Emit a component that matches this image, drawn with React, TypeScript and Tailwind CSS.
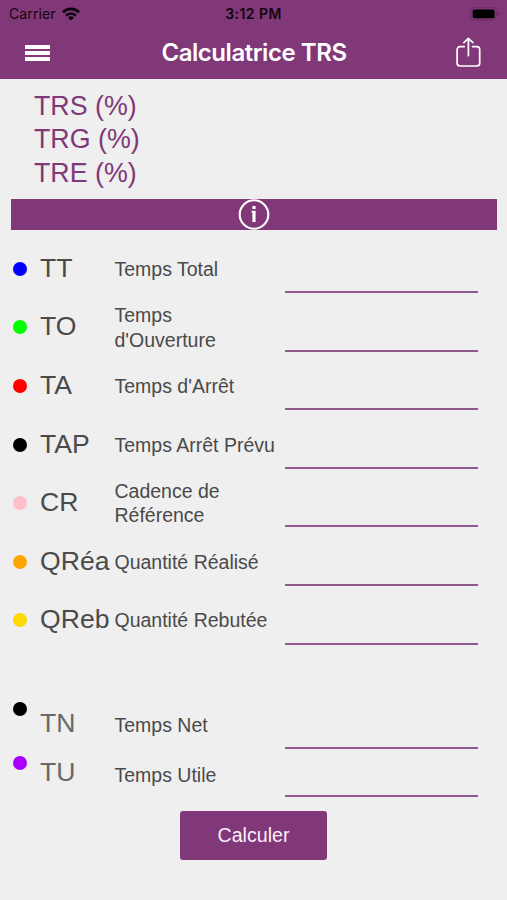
import React from "react";

const rates = ["TRS (%)", "TRG (%)", "TRE (%)"];

const inputs = [
  { code: "TT", label: "Temps Total", dot: "bg-[#0000ff]" },
  { code: "TO", label: "Temps d'Ouverture", dot: "bg-[#00ff00]" },
  { code: "TA", label: "Temps d'Arrêt", dot: "bg-[#ff0000]" },
  { code: "TAP", label: "Temps Arrêt Prévu", dot: "bg-black" },
  { code: "CR", label: "Cadence de Référence", dot: "bg-[#ffc0cb]" },
  { code: "QRéa", label: "Quantité Réalisé", dot: "bg-[#ffa500]" },
  { code: "QReb", label: "Quantité Rebutée", dot: "bg-[#ffd900]" },
];

function WifiIcon() {
  return (
    <svg width="18" height="14" viewBox="0 0 18 14" fill="none" stroke="#0d0310" strokeWidth="2.7">
      <path d="M1 5.2a11.3 11.3 0 0 1 16 0" />
      <path d="M4 8.6a7 7 0 0 1 10 0" />
      <path d="M9 13.6 5.9 10.6a4.4 4.4 0 0 1 6.2 0Z" fill="#0d0310" stroke="none" />
    </svg>
  );
}

function BatteryIcon() {
  return (
    <svg width="30" height="14" viewBox="0 0 30 14">
      <rect x="0.8" y="0.7" width="25.4" height="12.2" rx="3.5" fill="none" stroke="#6a2c64" strokeWidth="1" />
      <rect x="2.6" y="2.4" width="22" height="8.8" rx="2" fill="#000" />
      <path d="M27.6 4.8c1.8.6 1.8 3.4 0 4Z" fill="#55214f" />
    </svg>
  );
}

function ShareIcon() {
  return (
    <svg width="26" height="32" viewBox="0 0 26 32" fill="none" stroke="#fff" strokeWidth="1.7" strokeLinecap="round" strokeLinejoin="round">
      <path d="M8.2 9.6H4.1a3 3 0 0 0-3 3v13.4a3 3 0 0 0 3 3h16.6a3 3 0 0 0 3-3V12.6a3 3 0 0 0-3-3h-4.1" />
      <path d="M12.4 18.7V1.4M7.9 5.7l4.5-4.4 4.5 4.4" />
    </svg>
  );
}

function InfoIcon() {
  return (
    <svg width="32" height="31" viewBox="0 0 32 31" fill="none">
      <circle cx="16" cy="15.5" r="14.3" stroke="#fff" strokeWidth="2.1" />
      <path d="M14.4 7h3.2v3h-3.2zM13.6 11.8h4V23h-3.2v-9.2h-.8z" fill="#fff" />
    </svg>
  );
}

function Dot({ color }: { color: string }) {
  return <span className={`block size-3.5 shrink-0 rounded-full ${color}`} />;
}

export default function App() {
  return (
    <div className="h-[900px] w-[507px] overflow-hidden bg-[#efefef] font-['Liberation_Sans',Arial,sans-serif] text-[#4a4a4a]">
      <header className="h-[79px] bg-[#803878] font-['Inter',sans-serif]">
        <div className="grid h-[27px] grid-cols-3 items-center pr-[7px] pl-[9px] text-[#14040f]">
          <div className="flex items-center gap-[6px] text-[14px] tracking-[0.1px]">
            <span>Carrier</span>
            <WifiIcon />
          </div>
          <span className="pr-[2px] text-center text-[14px] font-semibold tracking-[0.45px]">3:12 PM</span>
          <div className="flex justify-end">
            <BatteryIcon />
          </div>
        </div>
        <div className="flex h-[52px] items-center justify-between px-[25px]">
          <div className="flex w-[25px] flex-col gap-[2px]">
            <span className="h-[4px] bg-white" />
            <span className="h-[4px] bg-white" />
            <span className="h-[4px] bg-white" />
          </div>
          <h1 className="pl-[2px] text-[24px] font-semibold tracking-[-0.45px] text-white">Calculatrice TRS</h1>
          <ShareIcon />
        </div>
      </header>

      <div className="pt-[10.5px] pl-[34px] text-[26.8px] leading-[33.6px] text-[#803878]">
        {rates.map((rate) => (
          <p key={rate}>{rate}</p>
        ))}
      </div>

      <div className="mt-[8.5px] mr-[10px] ml-[11px] flex h-[31px] items-center justify-center bg-[#803878]">
        <InfoIcon />
      </div>

      <div className="mt-[9.7px]">
        {inputs.map((row) => (
          <div key={row.code} className="flex h-[58.6px] items-center pl-[13px]">
            <Dot color={row.dot} />
            <span className="ml-[13px] w-[74.5px] pb-[2px] text-[26.6px] leading-8">{row.code}</span>
            <span className="w-[170px] pt-[0.6px] pr-2 text-[19.5px] leading-[24.4px]">{row.label}</span>
            <span className="mb-[5px] h-[2px] w-[193px] self-end bg-[#935890]" />
          </div>
        ))}
      </div>

      <div className="mt-[52px] flex h-[49px] pl-[13px]">
        <Dot color="bg-black" />
        <span className="mt-[5px] ml-[13px] w-[74.5px] text-[26.6px] leading-8 text-[#686868]">TN</span>
        <span className="mt-[11px] w-[170px] text-[19.5px] leading-[24.4px]">Temps Net</span>
        <span className="mb-[2px] h-[2px] w-[193px] self-end bg-[#935890]" />
      </div>
      <div className="flex h-[48px] pl-[13px]">
        <span className="mt-[5px]">
          <Dot color="bg-[#aa00ff]" />
        </span>
        <span className="mt-[5px] ml-[13px] w-[74.5px] text-[26.6px] leading-8 text-[#686868]">TU</span>
        <span className="mt-[12px] w-[170px] text-[19.5px] leading-[24.4px]">Temps Utile</span>
        <span className="mb-[2px] h-[2px] w-[193px] self-end bg-[#935890]" />
      </div>

      <button className="mt-[12px] ml-[180px] block h-[49px] w-[147px] rounded-[3px] bg-[#803878] pt-[2px] text-[19.6px] text-[#fbeefa]">
        Calculer
      </button>
    </div>
  );
}
